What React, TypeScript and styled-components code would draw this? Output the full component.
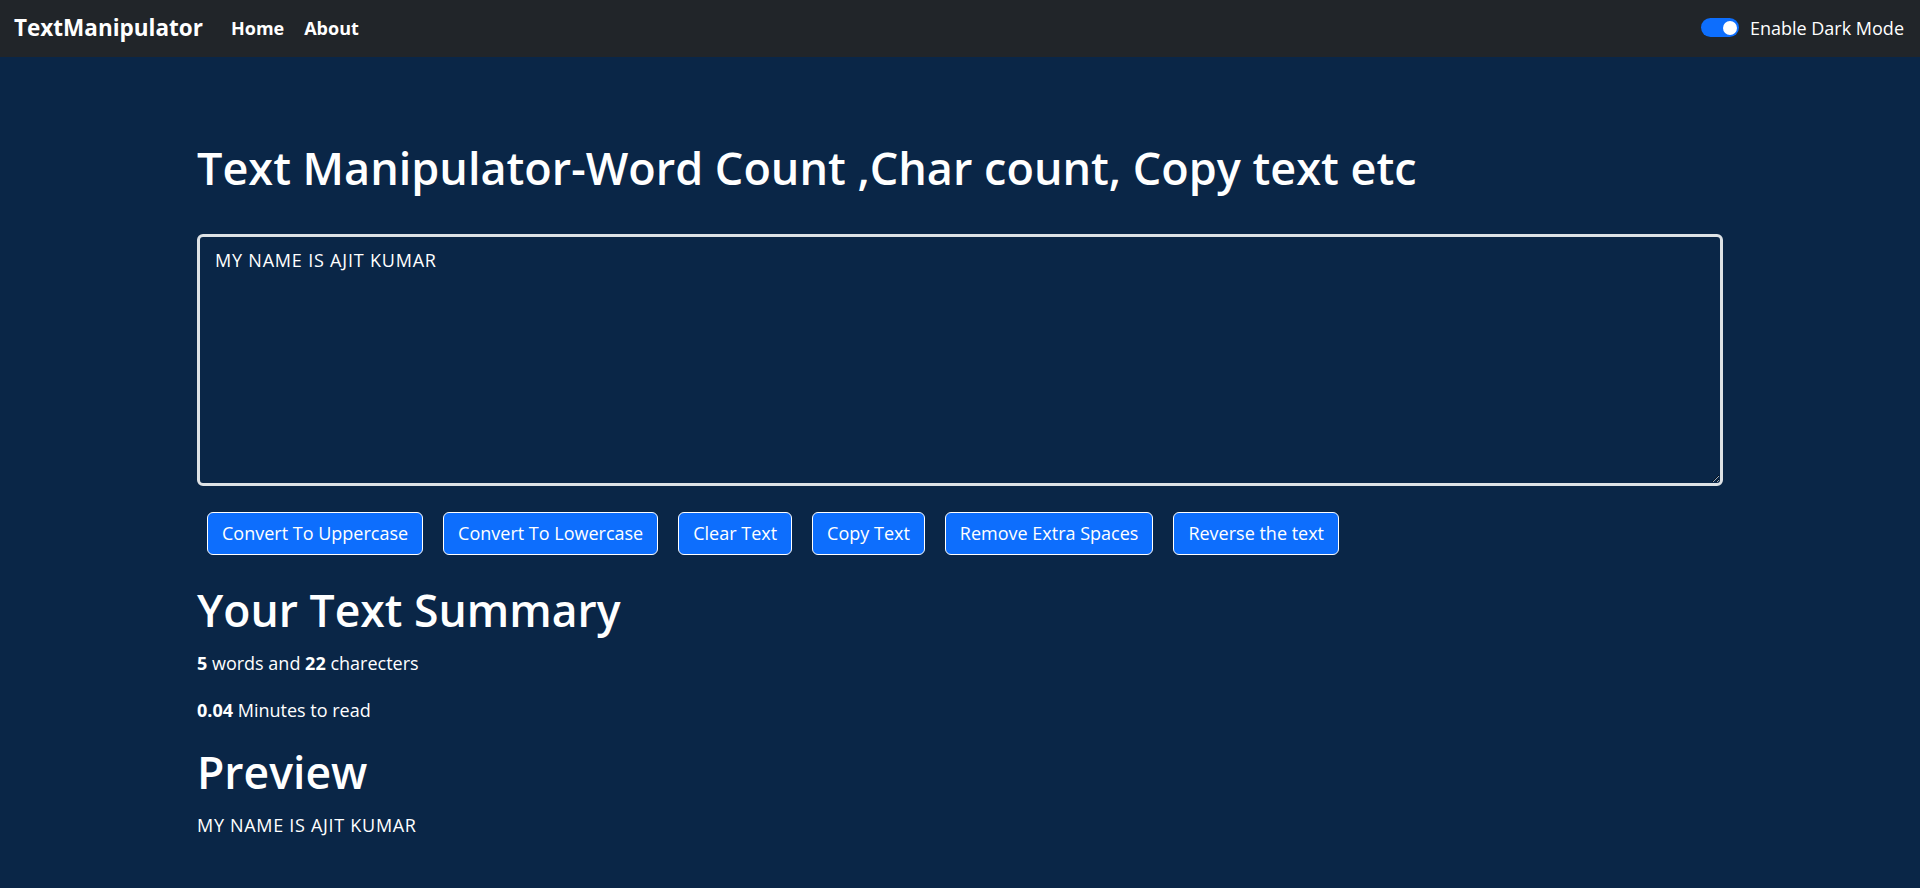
import React from 'react';
import styled, { createGlobalStyle } from 'styled-components';

const GlobalStyle = createGlobalStyle`
    * {
        box-sizing: border-box;
    }
    body {
        margin: 0;
        background-color: #0a2647;
        font-family: "Open Sans", "Noto Sans", sans-serif;
        color: #FFFFFF;
    }
`;

const Navbar = styled.nav`
    height: 57px;
    background-color: #212529;
    display: flex;
    align-items: center;
    justify-content: space-between;
    padding: 0 16px 2px 14px;
`;

const NavLeft = styled.div`
    display: flex;
    align-items: center;
`;

const Brand = styled.a`
    font-size: 22.5px;
    font-weight: 700;
    color: #FFFFFF;
    margin-right: 28px;
    text-decoration: none;
`;

const NavLink = styled.a`
    font-size: 18px;
    font-weight: 700;
    color: #FFFFFF;
    margin-right: 20px;
    text-decoration: none;
`;

const SwitchWrap = styled.label`
    display: flex;
    align-items: center;
    gap: 11px;
    font-size: 18px;
    color: #FFFFFF;
`;

const Switch = styled.span<{ on: boolean }>`
    position: relative;
    width: 38px;
    height: 19px;
    border-radius: 10px;
    background-color: ${props => (props.on ? '#0d6efd' : '#6c757d')};

    &::after {
        content: "";
        position: absolute;
        top: 2.5px;
        left: ${props => (props.on ? '22px' : '2px')};
        width: 14px;
        height: 14px;
        border-radius: 50%;
        background-color: #FFFFFF;
    }
`;

const Container = styled.main`
    width: 1526px;
    margin: 0 auto;
    padding-top: 82px;
`;

const Title = styled.h1`
    font-size: 45px;
    font-weight: 600;
    line-height: 57.6px;
    margin: 0 0 37px 0;
`;

const TextBox = styled.textarea`
    display: block;
    width: 100%;
    height: 252px;
    background-color: #0a2647;
    color: #FFFFFF;
    border: 3px solid #dee2e6;
    border-radius: 6px;
    padding: 10px 15px;
    font-family: inherit;
    font-size: 18px;
    line-height: 1.5;
    letter-spacing: 0.8px;
    outline: none;
    color-scheme: dark;
`;

const ButtonRow = styled.div`
    display: flex;
    flex-wrap: wrap;
    margin-top: 26px;
`;

const Button = styled.button`
    background-color: #0d6efd;
    color: #FFFFFF;
    border: 1px solid #FFFFFF;
    border-radius: 6px;
    padding: 7px 14px;
    margin: 0 10px;
    font-family: inherit;
    font-size: 18px;
    line-height: 27.75px;
`;

const Heading = styled.h2<{ first?: boolean }>`
    font-size: 44.5px;
    font-weight: 600;
    line-height: 57.6px;
    margin: ${props => (props.first ? '26px' : '0')} 0 11px 0;
`;

const Para = styled.p`
    font-size: 18px;
    line-height: 27.75px;
    margin: 0 0 19px 0;
`;

const Preview = styled(Para)`
    letter-spacing: 0.7px;
`;

const text = 'MY NAME IS AJIT KUMAR';
const buttons = [
    'Convert To Uppercase',
    'Convert To Lowercase',
    'Clear Text',
    'Copy Text',
    'Remove Extra Spaces',
    'Reverse the text',
];

export default function App() {
    const words = text.split(/\s+/).filter(w => w.length > 0).length;
    const chars = 22;
    return (
        <>
            <GlobalStyle />
            <Navbar>
                <NavLeft>
                    <Brand href="#">TextManipulator</Brand>
                    <NavLink href="#">Home</NavLink>
                    <NavLink href="#">About</NavLink>
                </NavLeft>
                <SwitchWrap>
                    <Switch on={true} />
                    Enable Dark Mode
                </SwitchWrap>
            </Navbar>
            <Container>
                <Title>Text Manipulator-Word Count ,Char count, Copy text etc</Title>
                <TextBox defaultValue={text} />
                <ButtonRow>
                    {buttons.map(b => (
                        <Button key={b}>{b}</Button>
                    ))}
                </ButtonRow>
                <Heading first>Your Text Summary</Heading>
                <Para>
                    <b>{words}</b> words and <b>{chars}</b> charecters
                </Para>
                <Para>
                    <b>{(0.008 * words).toFixed(2)}</b> Minutes to read
                </Para>
                <Heading>Preview</Heading>
                <Preview>{text}</Preview>
            </Container>
        </>
    );
}
